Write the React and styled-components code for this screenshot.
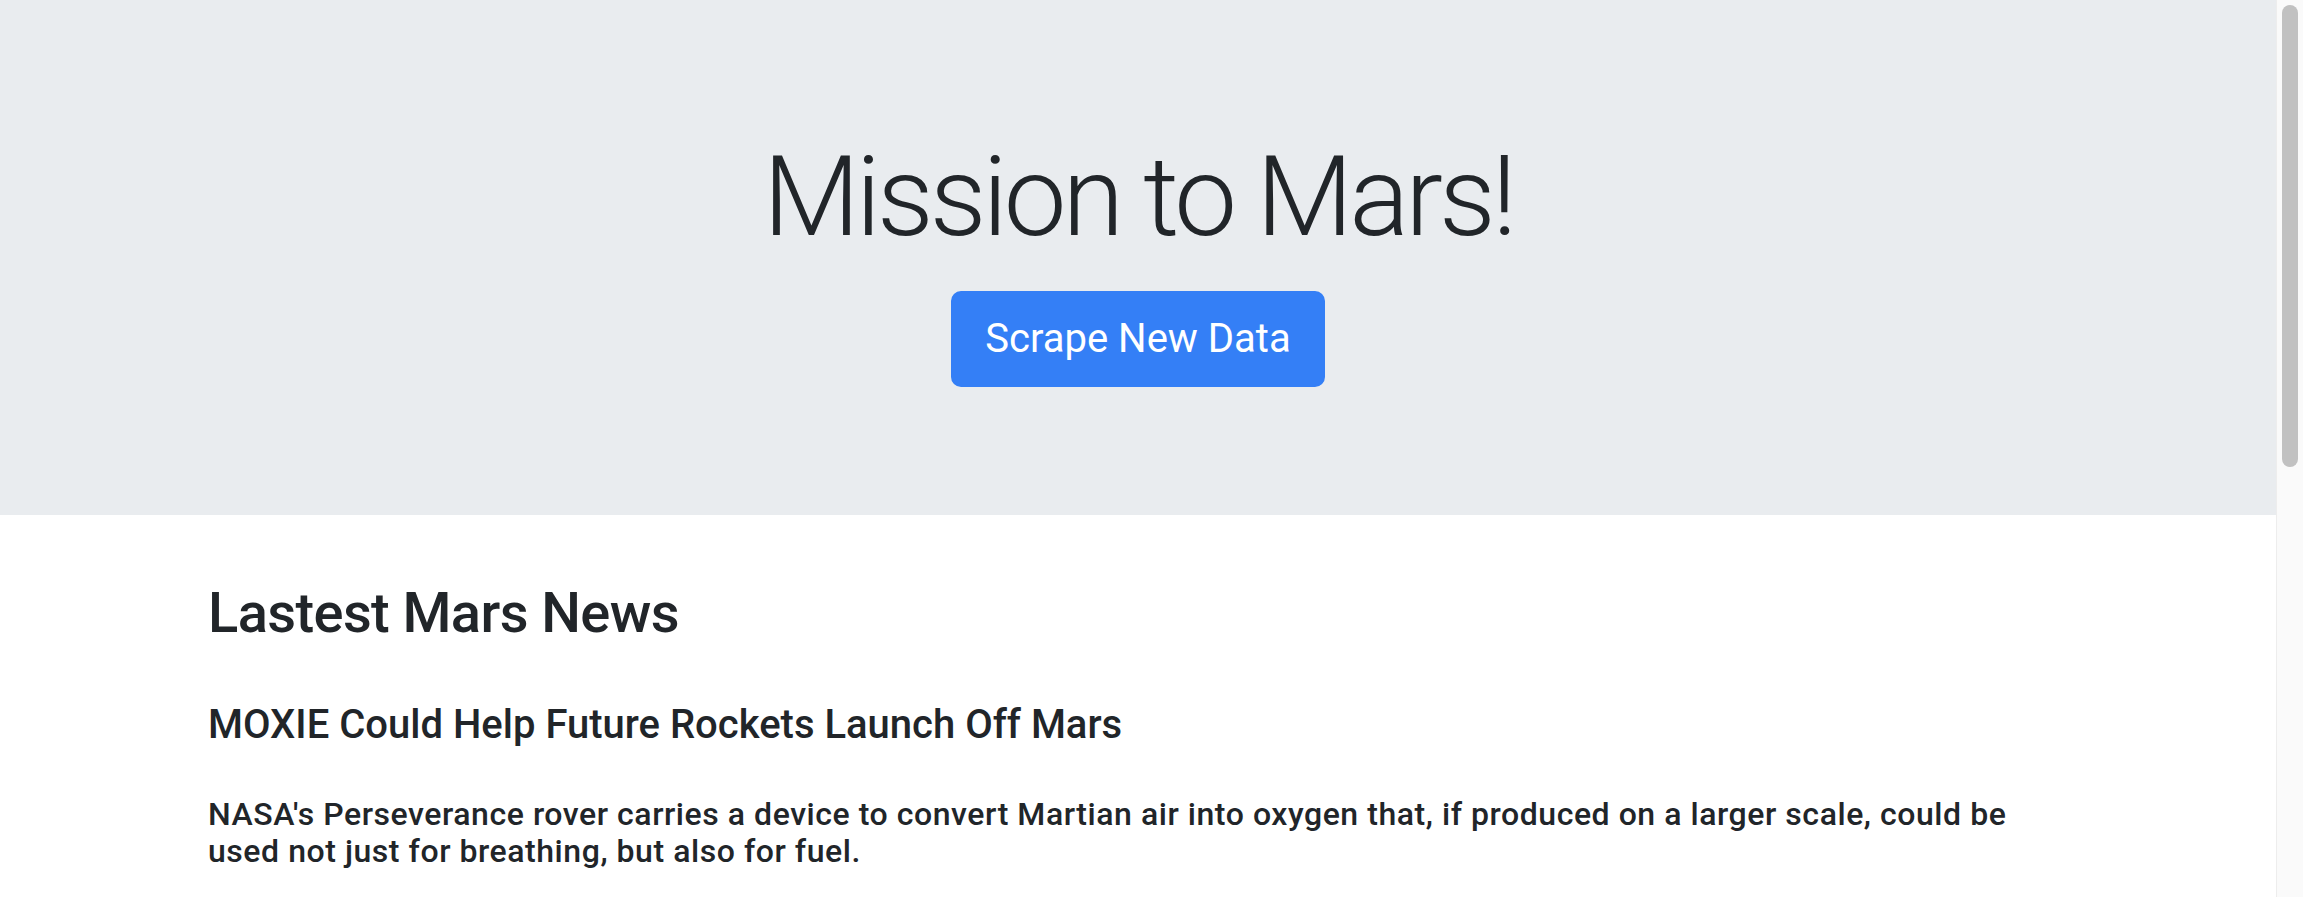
import React from 'react';
import styled, { createGlobalStyle } from 'styled-components';

const GlobalStyle = createGlobalStyle`
  html, body {
    margin: 0;
    padding: 0;
  }
  body {
    font-family: 'Roboto', 'Noto Sans', sans-serif;
    color: #212529;
    background: #fff;
  }
`;

const Viewport = styled.div`
  display: flex;
  height: 100vh;
  overflow: hidden;
`;

const Page = styled.div`
  flex: 1;
  min-width: 0;
`;

const ScrollTrack = styled.div`
  width: 27px;
  flex: none;
  box-sizing: border-box;
  background: #fafafa;
  border-left: 1px solid #ededed;
  padding: 5px 5px 0 5px;
`;

const ScrollThumb = styled.div`
  height: 462px;
  border-radius: 8px;
  background: #c1c1c1;
`;

const Jumbotron = styled.header`
  background: #e9ecef;
  padding: 128px 0;
  margin-bottom: 65.3px;
  text-align: center;
`;

const Container = styled.div`
  max-width: 1920px;
  margin: 0 auto;
  padding: 0 30px;
  box-sizing: border-box;
`;

const Title = styled.h1`
  font-size: 112px;
  font-weight: 300;
  line-height: 1.2;
  letter-spacing: -4px;
  padding-top: 1.5px;
  margin: 0 0 27.1px;
`;

const Button = styled.a`
  display: inline-block;
  font-size: 40px;
  line-height: 60px;
  padding: 16px 32px;
  border: 2px solid #347ff6;
  border-radius: 10px;
  background: #347ff6;
  color: #fff;
  text-decoration: none;
  cursor: pointer;
`;

const SectionTitle = styled.h3`
  font-size: 56px;
  font-weight: 500;
  line-height: 1.2;
  letter-spacing: -0.6px;
  margin: 0 0 53.1px;
`;

const NewsTitle = styled.h5`
  font-size: 40px;
  font-weight: 500;
  line-height: 1.2;
  margin: 0 0 47.8px;
`;

const NewsBody = styled.p`
  font-size: 32px;
  font-weight: 500;
  line-height: 36.8px;
  letter-spacing: 0.55px;
  margin: 0;
`;

export default function App() {
  return (
    <Viewport>
      <GlobalStyle />
      <Page>
        <Jumbotron>
          <Title>Mission to Mars!</Title>
          <Button href="#scrape">Scrape New Data</Button>
        </Jumbotron>
        <Container>
          <SectionTitle>Lastest Mars News</SectionTitle>
          <NewsTitle>MOXIE Could Help Future Rockets Launch Off Mars</NewsTitle>
          <NewsBody>
            NASA's Perseverance rover carries a device to convert Martian air into oxygen that, if produced on a larger scale, could be used not just for breathing, but also for fuel.
          </NewsBody>
        </Container>
      </Page>
      <ScrollTrack>
        <ScrollThumb />
      </ScrollTrack>
    </Viewport>
  );
}
